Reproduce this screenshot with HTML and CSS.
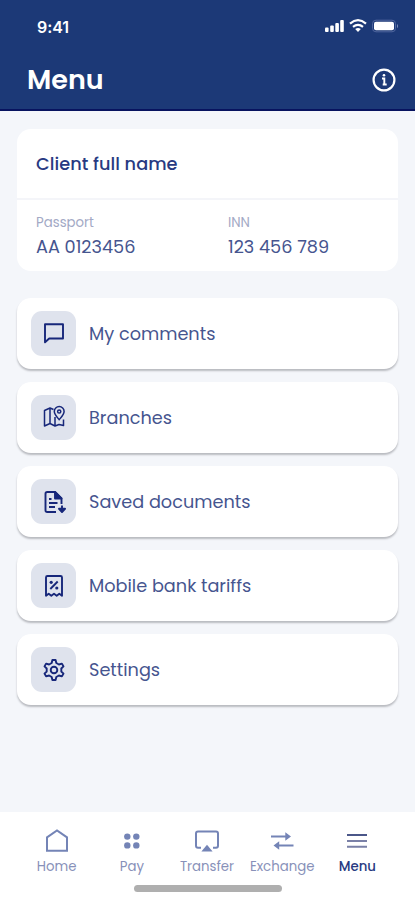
FILE: index.html
```html
<!DOCTYPE html>
<html lang="en">
<head>
<meta charset="utf-8">
<meta name="viewport" content="width=device-width">
<title>Menu</title>
<link rel="stylesheet" href="styles.css">
</head>
<body>
<div class="screen">
  <header class="header">
    <div class="status">
      <span class="time">9:41</span>
      <svg class="signals" width="76" height="16" viewBox="0 0 76 16" fill="#fff">
        <rect x="1" y="9.4" width="3.6" height="4.6" rx="1"/><rect x="6.2" y="7.4" width="3.6" height="6.6" rx="1"/><rect x="11.3" y="5" width="3.6" height="9" rx="1"/><rect x="16.2" y="2" width="3.6" height="12" rx="1"/>
        <g fill="none" stroke="#fff" stroke-width="2.2"><path d="M26 5.6Q34 -1.2 42 5.6"/><path d="M29 8.9Q34 4.9 39 8.9"/></g>
        <path d="M31.2 10.9Q34 9 36.8 10.9L34 14Z"/>
        <rect x="48.5" y="2.2" width="23" height="11.6" rx="3.5" fill="none" stroke="#50669e" stroke-width="1"/>
        <rect x="50" y="3.7" width="20" height="8.6" rx="2"/>
        <path d="M73 5.7Q75 8 73 10.3Z" fill="#7f90bb"/>
      </svg>
    </div>
    <div class="titlebar">
      <h1>Menu</h1>
      <svg width="26" height="26" viewBox="0 0 26 26" fill="none" stroke="#fff" stroke-width="2.2"><circle cx="13" cy="13" r="10.4"/><path d="M11 11.5H13.3V17.5M11.7 17.5H15.7" stroke-width="1.9"/><circle cx="13" cy="8.3" r="1.3" fill="#fff" stroke="none"/></svg>
    </div>
  </header>

  <main class="content">
    <section class="client">
      <h2>Client full name</h2>
      <dl>
        <div><dt>Passport</dt><dd>AA 0123456</dd></div>
        <div><dt>INN</dt><dd>123 456 789</dd></div>
      </dl>
    </section>

    <nav class="list">
      <a class="row"><span class="tile"><svg viewBox="0 0 24 24"><path d="M3 3.2H21V17.5H7.2L3 21.3Z"/></svg></span><span>My comments</span></a>
      <a class="row"><span class="tile"><svg class="thin" viewBox="0 0 24 24"><path d="M11.5 4.5L8 3L2.5 5.5V21L8 18.5L13 21L17 19.5L21.5 20.5V14.5M8 3V18.5M13 12V21"/><path d="M17.2 14.7C14.5 11.5 12.3 9.3 12.3 6.5A4.9 4.9 0 0 1 22.1 6.5C22.1 9.3 19.9 11.5 17.2 14.7Z"/><circle cx="17.2" cy="6.5" r="1.6"/></svg></span><span>Branches</span></a>
      <a class="row"><span class="tile"><svg viewBox="0 0 24 24"><path d="M14 22H5.2Q3.5 22 3.5 20.2V3.8Q3.5 2 5.2 2H13L19.5 8.5V14"/><path d="M13 2V8.5H19.5Z" fill="#17277a"/><path d="M7 9H9.5M7 13H15.5M7 17H13"/><path d="M20 15.5V21.5M17 18.8L20 22L23 18.8Z" fill="#17277a"/></svg></span><span>Saved documents</span></a>
      <a class="row"><span class="tile"><svg viewBox="0 0 24 24"><path d="M4 21.8V3.5Q4 2 5.5 2H18.5Q20 2 20 3.5V21.8L17.3 19.8L14.7 21.8L12 19.8L9.3 21.8L6.7 19.8Z"/><path d="M8.3 15L15.7 7.5"/><g fill="#17277a" stroke="none"><circle cx="9.2" cy="8.3" r="1.6"/><circle cx="14.8" cy="14" r="1.6"/></g></svg></span><span>Mobile bank tariffs</span></a>
      <a class="row"><span class="tile"><svg viewBox="0 0 24 24"><path d="M9.7 5L10.4 2H13.6L14.3 5L16.9 6.5L19.9 5.6L21.5 8.4L19.3 10.5V13.5L21.5 15.6L19.9 18.4L16.9 17.5L14.3 19L13.6 22H10.4L9.7 19L7.1 17.5L4.1 18.4L2.5 15.6L4.7 13.5V10.5L2.5 8.4L4.1 5.6L7.1 6.5Z"/><circle cx="12" cy="12" r="3.3"/></svg></span><span>Settings</span></a>
    </nav>
  </main>

  <footer class="tabbar">
    <div class="tabs">
      <a class="tab"><svg viewBox="0 0 26 26"><path d="M3 9.3L13 2.5L23 9.3V22.8H3Z"/></svg><span>Home</span></a>
      <a class="tab"><svg viewBox="0 0 26 26"><g fill="#7484b6" stroke="none"><circle cx="8.3" cy="8.6" r="3.2"/><circle cx="17.3" cy="8.6" r="3.2"/><circle cx="8.3" cy="17.4" r="3.2"/><circle cx="17.3" cy="17.4" r="3.2"/></g></svg><span>Pay</span></a>
      <a class="tab"><svg viewBox="0 0 26 26"><path d="M7 19.8H4Q2 19.8 2 17.8V5.5Q2 3.5 4 3.5H22Q24 3.5 24 5.5V17.8Q24 19.8 22 19.8H19"/><path d="M13 16.7L18.6 23.5H7.4Z" fill="#7484b6" stroke="none"/></svg><span>Transfer</span></a>
      <a class="tab"><svg viewBox="0 0 26 26"><path d="M2 8.5H18M24.5 17.5H8"/><path d="M16.3 4.3L22 8.5L16.3 12.7ZM10.2 13.3L4.5 17.5L10.2 21.7Z" fill="#7484b6" stroke="none"/></svg><span>Exchange</span></a>
      <a class="tab active"><svg viewBox="0 0 26 26"><path d="M3 7H23" stroke="#4b5789"/><path d="M3 13H23M3 18.8H23" stroke="#7a80a7"/></svg><span>Menu</span></a>
    </div>
    <div class="indicator"></div>
  </footer>
</div>
</body>
</html>
```
FILE: styles.css
```css
* { box-sizing: border-box; }
body {
  margin: 0;
  font-family: Poppins, Inter, "Liberation Sans", sans-serif;
  font-feature-settings: "cv11" 1;
  color: #46558f;
}
h1, h2, dl, dd { margin: 0; }
svg { display: block; flex: none; }
span, h1, h2, dt, dd { white-space: nowrap; }
.screen {
  width: 415px;
  height: 900px;
  display: flex;
  flex-direction: column;
  background: #f4f6fa;
  overflow: hidden;
}
.header {
  height: 111px;
  background: #1c3977;
  border-bottom: 2px solid #08135f;
  color: #fff;
  flex: none;
}
.status {
  display: flex;
  justify-content: space-between;
  padding: 18px 15px 0 37px;
  height: 64px;
}
.time { font-family: Inter, sans-serif; font-size: 16px; line-height: 19px; font-weight: 600; letter-spacing: -.1px; }
.titlebar {
  display: flex;
  justify-content: space-between;
  align-items: center;
  height: 32px;
  padding: 0 18px 0 27px;
}
h1 { font-size: 27px; line-height: 32px; font-weight: 600; }
.content { flex: 1; padding: 18px 17px 0; }
.client {
  height: 142px;
  border-radius: 14px;
  background: #fff;
}
h2 {
  height: 71px;
  border-bottom: 2px solid #f4f5f9;
  padding-left: 19px;
  font-size: 17.7px;
  line-height: 70px;
  font-weight: 500;
  letter-spacing: .06px;
  color: #283a82;
}
dl { display: grid; grid-template-columns: 192px 1fr; padding: 14px 0 0 19px; }
dt { font-size: 13.3px; line-height: 18px; color: #a3a9c5; }
dd { font-size: 17.7px; line-height: 22px; margin-top: 4px; }
.list { display: flex; flex-direction: column; gap: 13.2px; margin-top: 26.7px; }
.row {
  height: 71px;
  display: flex;
  align-items: center;
  gap: 13px;
  padding-left: 14px;
  border-radius: 14px;
  background: #fff;
  box-shadow: 0 2px 2px #b9bbc0;
  font-size: 17.7px;
}
.tile {
  width: 45px;
  height: 45px;
  border-radius: 11px;
  background: #dfe3ed;
  display: grid;
  place-items: center;
}
.tile svg {
  width: 24px;
  height: 24px;
  fill: none;
  stroke: #17277a;
  stroke-width: 1.9;
  stroke-linejoin: round;
}
.tile .thin { stroke-width: 1.5; }
.tabbar { height: 88px; background: #fff; flex: none; }
.tabs {
  display: grid;
  grid-template-columns: repeat(5, 75.2px);
  padding: 16px 0 0 19px;
}
.tab { display: flex; flex-direction: column; align-items: center; color: #8891b9; }
.tab svg { width: 26px; height: 26px; fill: none; stroke: #7484b6; stroke-width: 2; }
.tab span { font-size: 13.3px; line-height: 18px; margin-top: 4px; font-weight: 400; }
.tab.active { color: #283a82; }
.tab.active span { font-weight: 500; }
.indicator { width: 148px; height: 7px; border-radius: 4px; background: #afafaf; margin: 9px 0 0 134px; }
```
